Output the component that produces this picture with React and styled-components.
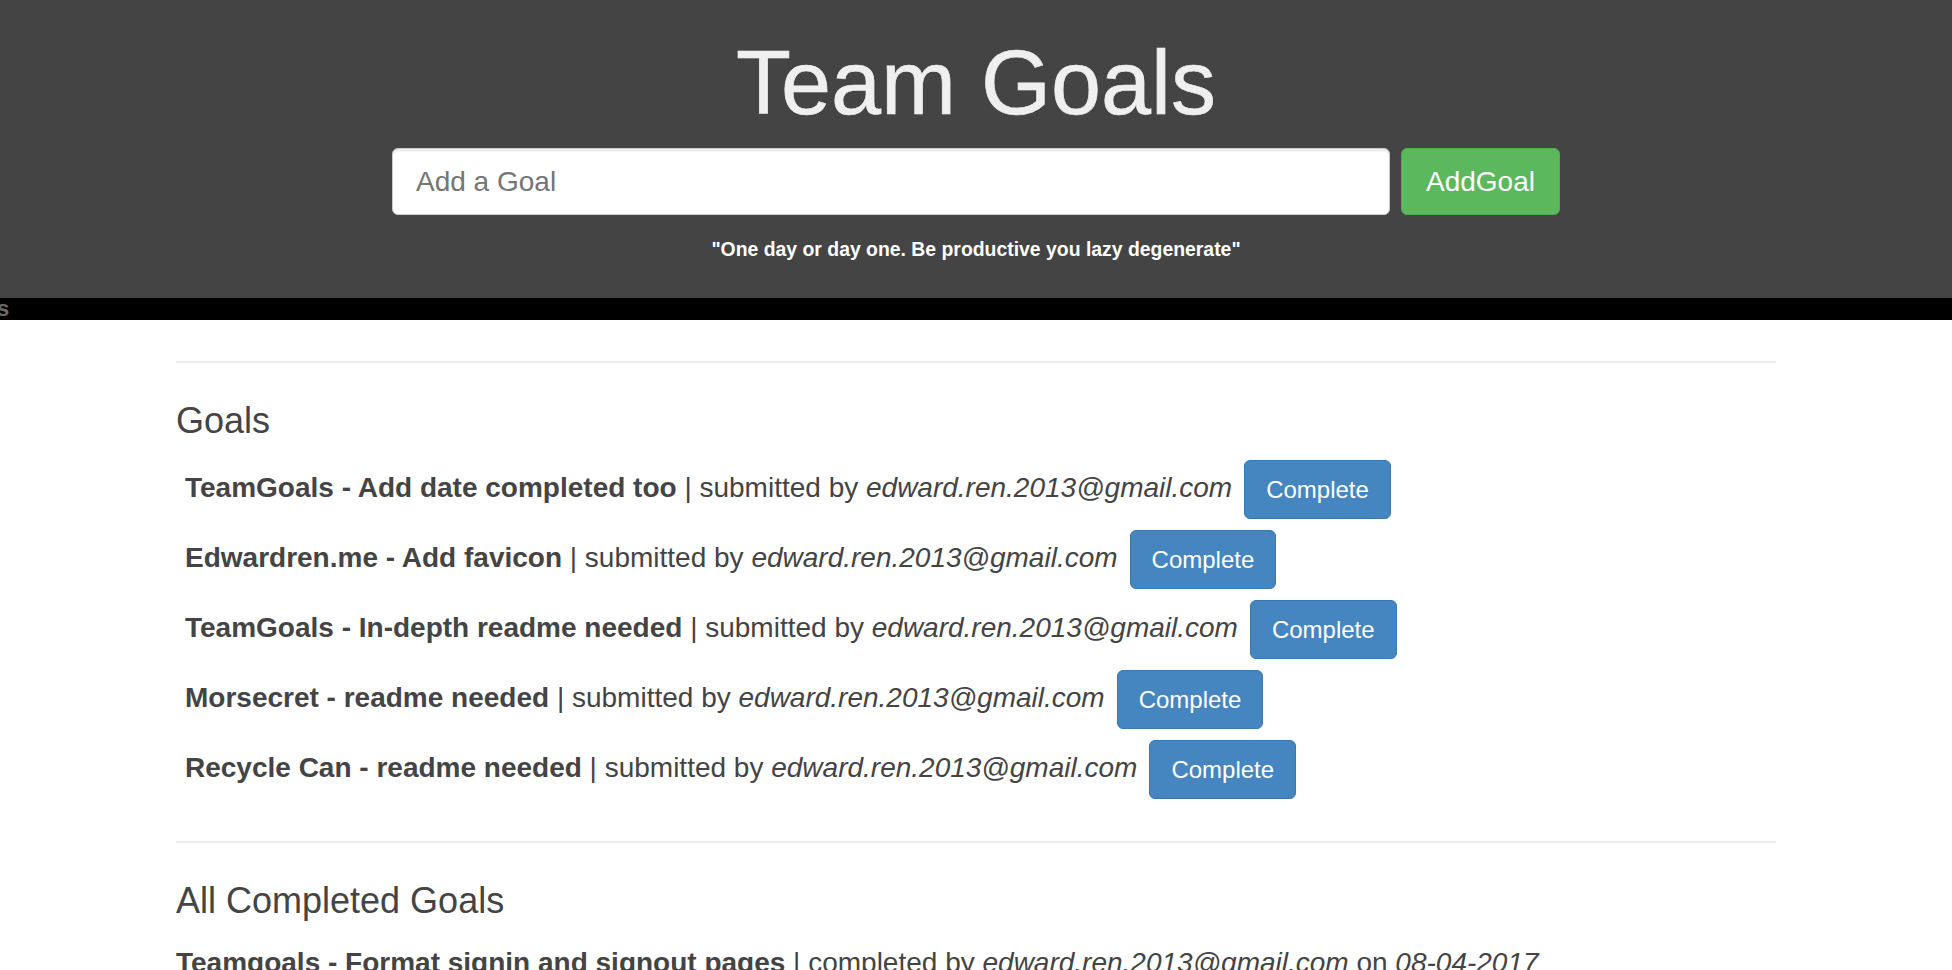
import React from "react";
import styled, { createGlobalStyle } from "styled-components";

const GlobalStyle = createGlobalStyle`
  *, *::before, *::after {
    box-sizing: border-box;
  }
  body {
    margin: 0;
    background: #fff;
    font-family: "Liberation Sans", Arial, Helvetica, sans-serif;
    color: #444;
  }
`;

const Header = styled.header`
  background: #444;
  padding: 34px 0 37px;
  text-align: center;
`;

const Title = styled.h1`
  margin: 0;
  font-size: 90px;
  line-height: 99px;
  font-weight: normal;
  color: #efefef;
  -webkit-text-stroke: 0.6px #efefef;
`;

const GoalForm = styled.form`
  display: flex;
  justify-content: center;
  gap: 11px;
  margin-top: 15px;
`;

const GoalInput = styled.input`
  width: 998px;
  height: 67px;
  padding: 0 23px;
  font-family: inherit;
  font-size: 28px;
  color: #555;
  background: #fff;
  border: 1px solid #ccc;
  border-radius: 6px;
  box-shadow: inset 0 2px 2px rgba(0, 0, 0, 0.09);
  outline: none;

  ::placeholder {
    color: #999;
  }
`;

const AddButton = styled.button`
  width: 159px;
  height: 67px;
  padding: 0;
  font-family: inherit;
  font-size: 28px;
  color: #fff;
  background: #5cb85c;
  border: 1px solid #4cae4c;
  border-radius: 6px;
  cursor: pointer;
`;

const Quote = styled.p`
  margin: 23px 0 0;
  font-size: 19.4px;
  line-height: 23px;
  font-weight: bold;
  color: #fff;
`;

const NavStrip = styled.div`
  height: 22px;
  background: #000;
  color: #6a6a6a;
  font-size: 22px;
  font-weight: bold;
  line-height: 22px;
  overflow: hidden;
  white-space: nowrap;

  span {
    display: inline-block;
    margin-left: -3px;
  }
`;

const Container = styled.main`
  width: 1600px;
  margin: 41px auto 0;
`;

const Divider = styled.hr`
  margin: ${(p) => (p.$spaced ? "42px 0 0" : "0")};
  height: 2px;
  border: 0;
  background: #eee;
`;

const SectionTitle = styled.h3`
  margin: 38px 0 0;
  font-size: 36px;
  line-height: 40px;
  font-weight: normal;
  color: #444;
`;

const GoalList = styled.ul`
  list-style: none;
  margin: ${(p) => (p.$done ? "25px" : "19px")} 0 0;
  padding: 0 0 0 ${(p) => (p.$done ? "0" : "9px")};
  display: flex;
  flex-direction: column;
  gap: 11px;
`;

const GoalRow = styled.li`
  display: flex;
  align-items: center;
  gap: 12px;
  min-height: ${(p) => (p.$done ? "auto" : "59px")};
  font-size: 28px;
  line-height: 1.2;
  color: #444;
  white-space: nowrap;

  b {
    font-weight: bold;
  }
  i {
    font-style: italic;
  }
`;

const GoalText = styled.span`
  margin-bottom: 3px;
`;

const CompleteButton = styled.button`
  height: 59px;
  padding: 0 21px;
  font-family: inherit;
  font-size: 24px;
  color: #fff;
  background: #4586c0;
  border: 1px solid #3a78b0;
  border-radius: 6px;
  cursor: pointer;
`;

const goals = [
  { title: "TeamGoals - Add date completed too", email: "edward.ren.2013@gmail.com" },
  { title: "Edwardren.me - Add favicon", email: "edward.ren.2013@gmail.com" },
  { title: "TeamGoals - In-depth readme needed", email: "edward.ren.2013@gmail.com" },
  { title: "Morsecret - readme needed", email: "edward.ren.2013@gmail.com" },
  { title: "Recycle Can - readme needed", email: "edward.ren.2013@gmail.com" },
];

const completed = [
  {
    title: "Teamgoals - Format signin and signout pages",
    email: "edward.ren.2013@gmail.com",
    date: "08-04-2017",
  },
];

const App = () => {
  return (
    <>
      <GlobalStyle />
      <Header>
        <Title>Team Goals</Title>
        <GoalForm onSubmit={(e) => e.preventDefault()}>
          <GoalInput placeholder="Add a Goal" />
          <AddButton type="submit">AddGoal</AddButton>
        </GoalForm>
        <Quote>"One day or day one. Be productive you lazy degenerate"</Quote>
      </Header>
      <NavStrip>
        <span>s</span>
      </NavStrip>
      <Container>
        <Divider />
        <SectionTitle>Goals</SectionTitle>
        <GoalList>
          {goals.map((g) => (
            <GoalRow key={g.title}>
              <GoalText>
                <b>{g.title}</b> | submitted by <i>{g.email}</i>
              </GoalText>
              <CompleteButton>Complete</CompleteButton>
            </GoalRow>
          ))}
        </GoalList>
        <Divider $spaced />
        <SectionTitle>All Completed Goals</SectionTitle>
        <GoalList $done>
          {completed.map((g) => (
            <GoalRow $done key={g.title}>
              <span>
                <b>{g.title}</b> | completed by <i>{g.email}</i> on <i>{g.date}</i>
              </span>
            </GoalRow>
          ))}
        </GoalList>
      </Container>
    </>
  );
};

export default App;
